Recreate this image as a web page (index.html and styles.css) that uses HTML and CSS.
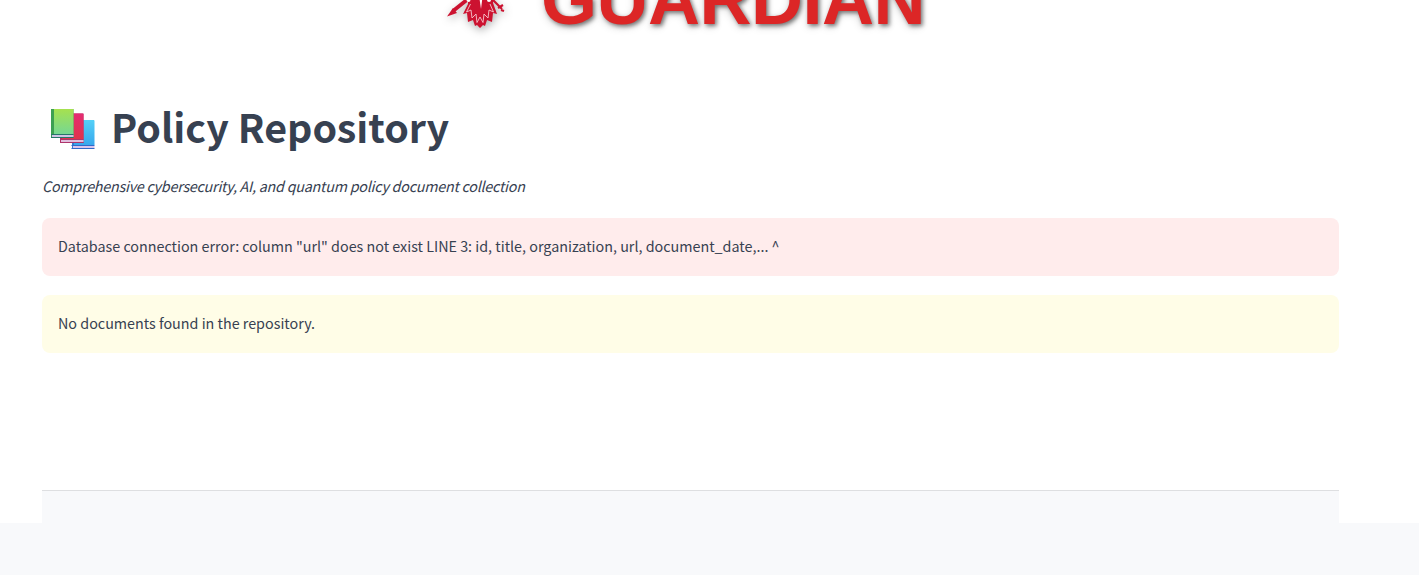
FILE: index.html
```
<!DOCTYPE html>
<html lang="en">
<head>
<meta charset="utf-8">
<title>Policy Repository</title>
<link rel="stylesheet" href="styles.css">
</head>
<body>
<main class="page">
  <header class="brand">
    <svg class="brand-emblem" width="100" height="60" viewBox="430 -15 100 60">
      <path fill="#cc1230" d="M468-15h25V3l4 11-4-1-1 9-5-2-2 6-2-1-3 3-3-3-2 1-2-6-5 2-1-9-4 1 5-10z"/>
      <path fill="none" stroke="#cc1230" stroke-width="3.800" d="M468-1 453 11"/>
      <path fill="#cc1230" d="M453 8 447 16.500 457 13z"/>
      <path fill="none" stroke="#cc1230" stroke-width="2.200" d="m492-1 10 10m-4-1 5-3m-2 5 3 1"/>
      <path fill="#fff" d="M477.500-15h6.500L481 9z"/>
      <circle cx="468.500" cy="0" r="2" fill="#fff"/><circle cx="489" cy="0" r="2" fill="#fff"/>
      <path fill="none" stroke="#f4c5cc" stroke-width=".9" d="m470.500 4-4 8 4.500-2 1 8 4-4 1 8.500 3-5.500 3 5.500 1-8.500 4 4 1-8 4.500 2L490 4"/>
    </svg>
    <div class="brand-name">GUARDIAN</div>
  </header>
  <h1 class="title">
    <svg class="books" width="46" height="42" viewBox="0 0 46 42">
      <defs>
        <linearGradient id="green" x2="0" y2="1"><stop stop-color="#a6e14f"/><stop offset="1" stop-color="#74d795"/></linearGradient>
        <linearGradient id="red" x2="0" y2="1"><stop stop-color="#e42c72"/><stop offset="1" stop-color="#df344c"/></linearGradient>
        <linearGradient id="blue" x2="0" y2="1"><stop stop-color="#54d0f7"/><stop offset="1" stop-color="#38a8ed"/></linearGradient>
      </defs>
      <path fill="#347bd0" d="M22 11h22v29H22z"/><path fill="url(#blue)" d="M24 11h19.500q1 0 1 1v24H24z"/>
      <path fill="#d9c5ed" d="M23 37h21.500v2H23z"/><path fill="#3169c9" d="M21.500 36h23v1h-23zM21.500 39h23v1h-23z"/>
      <path fill="#b42e66" d="M10 4.500h23.500V34H10z"/><path fill="url(#red)" d="M12 4.500h20.500q1 0 1 1V30H12z"/>
      <path fill="#e1bddd" d="M11 31h22.500v2H11z"/><path fill="#ae356b" d="M10 30h23.500v1H10zM10 33h23.500v1H10z"/>
      <path fill="#3da052" d="M1 0h22.500v29H1z"/><path fill="url(#green)" d="M4 0h19.500v26H4z"/>
      <path fill="#d0c4e4" d="M2 26h21.500v2H2z"/><path fill="#27746a" d="M1 25h22.500v1H1zM1 28h22.500v1H1z"/>
    </svg>
    <span class="title-text">Policy Repository</span>
  </h1>
  <p class="subtitle">Comprehensive cybersecurity, AI, and quantum policy document collection</p>
  <div class="alert alert-error">Database connection error: column "url" does not exist LINE 3: id, title, organization, url, document_date,... ^</div>
  <div class="alert alert-warning">No documents found in the repository.</div>
  <div class="panel"></div>
</main>
</body>
</html>
```

FILE: styles.css
```
* { box-sizing: border-box; }
body {
  margin: 0;
  height: 575px;
  overflow: hidden;
  background: #f8f9fb;
  color: #374151;
  font-family: "Noto Sans CJK SC", "Noto Sans", sans-serif;
  font-size: 14.33px;
}
.page {
  height: 523px;
  padding: 0 80px 0 42px;
  background: #fff;
}
.brand {
  display: flex;
  height: 109px;
  padding-left: 388px;
}
.brand-emblem {
  flex: none;
  margin-top: -15px;
  filter: drop-shadow(1px 3px 4px rgba(0, 0, 0, .3));
}
.brand-name {
  margin: -42px 0 0 11px;
  height: 83px;
  color: #dc2626;
  font: bold 72px/83px "Liberation Sans", Arial, sans-serif;
  letter-spacing: -.5px;
  text-shadow: 2px 2px 4px rgba(0, 0, 0, .5), 0 3px 8px rgba(0, 0, 0, .15);
}
.title {
  display: flex;
  height: 65px;
  margin: 0;
  padding-left: 8px;
  gap: 15px;
  font-size: 39.4px;
  font-weight: 700;
  line-height: 40px;
}
.title-text { margin-top: -3px; }
.books { flex: none; }
.subtitle {
  margin: 0 0 20px;
  font-style: italic;
  letter-spacing: -.245px;
  line-height: 24px;
}
.alert {
  height: 58px;
  margin-bottom: 19px;
  padding: 16px;
  border-radius: 8px;
  line-height: 24px;
}
.alert-error { background: #ffecec; }
.alert-warning { background: #fffde7; }
.panel {
  height: 33px;
  margin-top: 137px;
  border-top: 1px solid #dedfe1;
  background: #f8f9fb;
}
```
